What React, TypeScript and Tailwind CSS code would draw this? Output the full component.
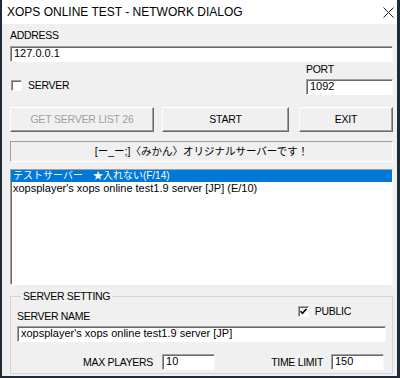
const ui = "font-['Liberation_Sans','Noto_Sans_CJK_JP',sans-serif]";

const sunken =
  "bg-white border border-t-[#a0a0a0] border-l-[#a0a0a0] border-b-white border-r-[#f8f8f8] shadow-[inset_1px_1px_0_#696969]";
const raised =
  "bg-[#f0f0f0] border border-t-white border-l-white border-b-[#696969] border-r-[#696969] shadow-[inset_-1px_-1px_0_#a0a0a0]";

function Edit({ value, className = "" }: { value: string; className?: string }) {
  return (
    <div className={`${sunken} h-[16px] pl-[3px] text-[11px] leading-[13px] text-black ${className}`}>
      {value}
    </div>
  );
}

function Label({ children, className = "" }: { children: React.ReactNode; className?: string }) {
  return (
    <div className={`h-[13px] text-[10.5px] leading-[13px] tracking-[-0.3px] text-black whitespace-nowrap ${className}`}>
      {children}
    </div>
  );
}

function CheckBox({ checked, label }: { checked?: boolean; label: string }) {
  return (
    <div className="flex items-center">
      <span className={`${sunken} w-[11px] h-[11px] flex items-center justify-center`}>
        {checked && (
          <svg width="9" height="9" viewBox="0 0 9 9">
            <path d="M1.5 4.2 L3.5 6.3 L7.5 1.8" fill="none" stroke="#000" strokeWidth="1.6" />
          </svg>
        )}
      </span>
      <Label className="ml-[6px]">{label}</Label>
    </div>
  );
}

const servers = [
  { text: "テストサーバー　★入れない(F/14)", size: "text-[10px]" },
  { text: "xopsplayer's xops online test1.9 server [JP] (E/10)", size: "text-[11px]" },
];

export default function App() {
  return (
    <div className={`${ui} w-[400px] h-[378px] flex flex-col bg-white border-l-2 border-r-[3px] border-b-2 border-[#1f2a37]`}>
      {/* Title bar */}
      <div className="h-[24px] flex items-center justify-between bg-white pl-[5px] pr-[3px]">
        <span className="text-[12px] font-['Liberation_Sans_Narrow','Liberation_Sans',sans-serif] text-black">
          XOPS ONLINE TEST - NETWORK DIALOG
        </span>
        <svg width="11" height="11" viewBox="0 0 11 11">
          <path d="M0.5 0.5 L10.5 10.5 M10.5 0.5 L0.5 10.5" stroke="#222" strokeWidth="1" />
        </svg>
      </div>

      {/* Client area */}
      <div className="flex-1 flex flex-col bg-[#f0f0f0] pl-[8px] pr-[4px] pt-[5px]">
        <Label>ADDRESS</Label>
        <Edit value="127.0.0.1" className="mt-[4px]" />

        <div className="flex justify-between mt-[1px]">
          <div className="self-end mb-[3px] ml-[1px]">
            <CheckBox label="SERVER" />
          </div>
          <div className="w-[87px]">
            <Label>PORT</Label>
            <Edit value="1092" className="mt-[3px]" />
          </div>
        </div>

        <div className="flex mt-[12px] h-[25px] text-[10.5px] tracking-[-0.2px]">
          <div className={`${raised} w-[144px] flex items-center justify-center text-[#a0a0a0]`}>
            GET SERVER LIST 26
          </div>
          <div className={`${raised} w-[127px] ml-[8px] flex items-center justify-center text-black`}>
            START
          </div>
          <div className={`${raised} flex-1 ml-[10px] flex items-center justify-center text-black`}>
            EXIT
          </div>
        </div>

        <div className="mt-[9px] h-[21px] border border-t-[#a0a0a0] border-l-[#a0a0a0] border-b-white border-r-white flex items-center justify-center text-[10.5px] text-black">
          [ー_ー;]〈みかん〉オリジナルサーバーです！
        </div>

        <div className={`${sunken} mt-[7px] h-[116px] leading-[12px]`}>
          {servers.map((s, i) => (
            <div
              key={s.text}
              className={`h-[12px] pl-[2px] whitespace-nowrap ${s.size} ${i === 0 ? "bg-[#0078d7] text-white" : "text-black"}`}
            >
              {s.text}
            </div>
          ))}
        </div>

        <fieldset className="mt-[5px] mb-[2px] flex-1 border border-[#d5d5d5] pl-[6px] pr-[6px]">
          <legend className="ml-[4px] px-[2px] text-[10.5px] leading-[13px] tracking-[-0.3px] text-black">
            SERVER SETTING
          </legend>
          <div className="flex justify-between items-start">
            <Label className="mt-[7px]">SERVER NAME</Label>
            <div className="mt-[2px] mr-[35px]">
              <CheckBox checked label="PUBLIC" />
            </div>
          </div>
          <Edit value="xopsplayer's xops online test1.9 server [JP]" className="mt-[3px]" />
          <div className="flex items-center mt-[12px]">
            <Label className="ml-[66px]">MAX PLAYERS</Label>
            <Edit value="10" className="ml-[9px] w-[53px]" />
            <Label className="ml-auto">TIME LIMIT</Label>
            <Edit value="150" className="ml-[8px] mr-[2px] w-[53px]" />
          </div>
        </fieldset>
      </div>
    </div>
  );
}
